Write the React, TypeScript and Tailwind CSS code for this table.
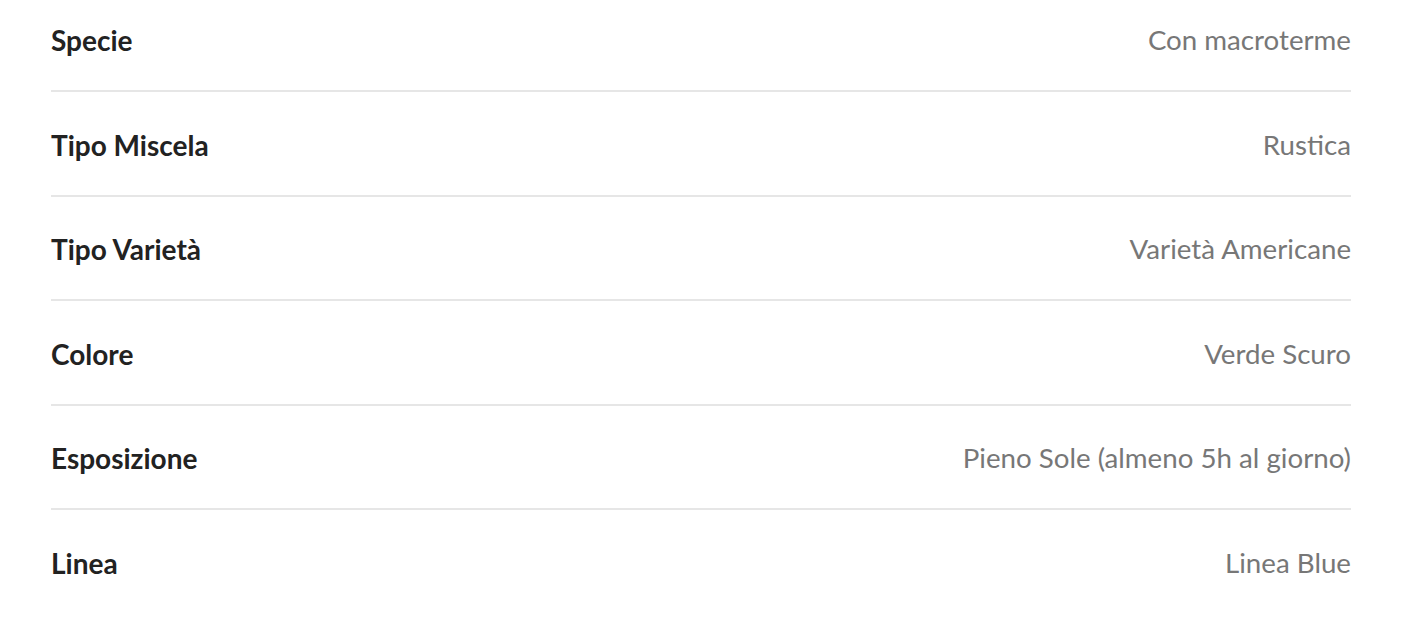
import React from "react";

const rows: [string, string][] = [
  ["Specie", "Con macroterme"],
  ["Tipo Miscela", "Rustica"],
  ["Tipo Varietà", "Varietà Americane"],
  ["Colore", "Verde Scuro"],
  ["Esposizione", "Pieno Sole (almeno 5h al giorno)"],
  ["Linea", "Linea Blue"],
];

export default function App() {
  return (
    <div className="w-[1404px] h-[618px] bg-white overflow-hidden font-['Lato',sans-serif]">
      <div className="mx-[51px] w-[1300px]">
        {rows.map(([k, v], i) => (
          <div
            key={k}
            className={
              "flex items-center justify-between h-[36px] box-content " +
              (i === 0 ? "pt-[22px] pb-[32px] " : "pt-[34.5px] pb-[32px] ") +
              (i < rows.length - 1 ? "border-b-2 border-[#e6e6e6]" : "")
            }
          >
            <span className="text-[28px] leading-[36px] font-bold text-[#222222]">{k}</span>
            <span className="text-[27.7px] leading-[36px] text-[#777777]">{v}</span>
          </div>
        ))}
      </div>
    </div>
  );
}
